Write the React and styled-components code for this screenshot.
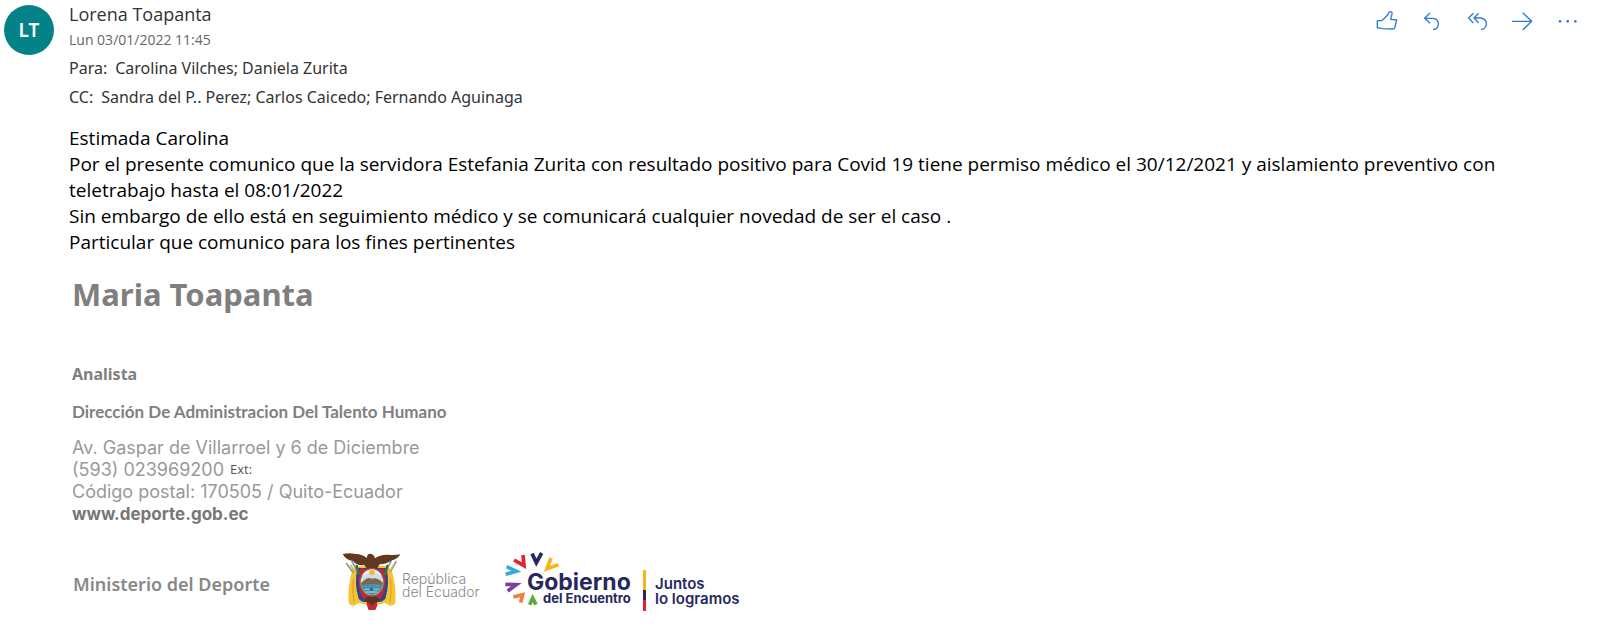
import React from "react";
import styled, { createGlobalStyle } from "styled-components";

const GlobalStyle = createGlobalStyle`
  * { box-sizing: border-box; }
  body {
    margin: 0;
    background: #fff;
    font-family: "Open Sans", "Noto Sans", sans-serif;
    color: #000;
  }
`;

const Message = styled.article`
  display: grid;
  grid-template-columns: 50px minmax(0, 1fr);
  column-gap: 15px;
  padding: 2px 24px 24px 4px;
`;

const Avatar = styled.div`
  display: flex;
  align-items: center;
  justify-content: center;
  width: 50px;
  height: 50px;
  margin-top: 3px;
  border-radius: 50%;
  background: #038387;
  color: #fff;
  font: 600 19px "Noto Sans", sans-serif;
`;

const Header = styled.header`
  display: flex;
  justify-content: space-between;
  align-items: flex-start;
`;

const Sender = styled.h1`
  margin: 0 0 2px;
  font-size: 18px;
  font-weight: 400;
  line-height: 24px;
  color: #333;
`;

const Sent = styled.time`
  display: block;
  margin-bottom: 2px;
  font-size: 14px;
  line-height: 24px;
  color: #666;
`;

const Recipients = styled.div`
  display: flex;
  gap: 8px;
  font-family: "Noto Sans", sans-serif;
  font-size: 16px;
  line-height: 29px;
  color: #333;
`;

const Actions = styled.div`
  display: flex;
  margin-right: -14px;
`;

const ActionButton = styled.button`
  display: flex;
  align-items: center;
  justify-content: center;
  width: 45px;
  height: 38px;
  padding: 0;
  border: 0;
  background: none;
  color: #2b7cd3;
  cursor: pointer;
`;

const ActionIcon = styled.svg`
  width: 24px;
  height: 24px;
  fill: none;
  stroke: currentColor;
  stroke-width: 4;
  stroke-linejoin: round;
`;

const Body = styled.div`
  margin-top: 13px;
  font-size: 19px;
  line-height: 26px;
`;

const Paragraph = styled.p`
  margin: 0;
`;

const Signature = styled.footer`
  margin-top: 19px;
  padding-left: 3px;
  color: #7f7f7f;
`;

const SignatureName = styled.h2`
  margin: 0 0 48px;
  font: 700 31px/40px "Noto Sans", sans-serif;
`;

const Role = styled.p`
  margin: 0 0 14px;
  font: 700 16px/24px "Noto Sans", sans-serif;
`;

const Department = styled.p`
  margin: 0 0 13px;
  font: 700 17px/24px Lato, sans-serif;
`;

const Address = styled.address`
  font: 400 18px/22px Inter, sans-serif;
  color: #999;
`;

const AddressLine = styled.div`
  display: flex;
  gap: 6px;
`;

const Extension = styled.span`
  font: 400 13px/20px "Open Sans", sans-serif;
  color: #555;
`;

const Website = styled.a`
  font-size: 17px;
  font-weight: 700;
  color: #777;
  text-decoration: none;
`;

const Logos = styled.div`
  display: flex;
  align-items: center;
  margin-top: 23px;
`;

const Ministry = styled.div`
  width: 270px;
  padding: 6px 0 0 1px;
  font: 600 18px/24px "Noto Sans", sans-serif;
  color: #888;
`;

const Republic = styled.div`
  width: 103px;
  padding-top: 8px;
  font: 300 14px/13px Inter, sans-serif;
  color: #888;
`;

const Crest = styled.svg`
  width: 60px;
  height: 60px;
`;

const Government = styled.svg`
  width: 240px;
  height: 66px;
  font-family: Inter, sans-serif;
  fill: #27285c;
`;

const actions = [
  {
    label: "Me gusta",
    viewBox: "21 9 72 72",
    shape: <path d="M25 44H38C46 38 56 30 60 19Q63 15 68 18Q70 20 69 25L65 40L83 42L77 66Q76 69 71 69L40 68Q32 65 25 66Z" />,
  },
  {
    label: "Responder",
    viewBox: "159 9 72 72",
    shape: <path d="M186 21L170 37L186 52M170 37H194Q211 38 211 54Q211 69 195 71" />,
  },
  {
    label: "Responder a todos",
    viewBox: "323 27 72 72",
    shape: <path d="M345 40L331 54L345 69M361 40L347 54L361 69M347 54H367Q384 56 384 72Q383 87 368 89" />,
  },
  {
    label: "Reenviar",
    viewBox: "458 27 72 72",
    shape: <path d="M461 64H520M493 38L520 64L493 90" />,
  },
  {
    label: "Más acciones",
    viewBox: "592 27 72 72",
    shape: (
      <g fill="currentColor" stroke="none">
        <circle cx="604" cy="64" r="4" />
        <circle cx="627" cy="64" r="4" />
        <circle cx="650" cy="64" r="4" />
      </g>
    ),
  },
];

const rays = [
  ["#27285c", "M99 26L112 53L128 24"],
  ["#f9b515", "M156 39L144 71L178 59"],
  ["#e2232e", "M45 45L75 62L72 30"],
  ["#35a8e0", "M23 65L52 79L20 88"],
  ["#7b3f98", "M19 118L52 119L26 138"],
  ["#f07e3c", "M43 156L71 149L65 173"],
  ["#5aaa3c", "M92 179L101 159L111 179"],
];

function EcuadorCrest() {
  return (
    <Crest viewBox="6 15 180 180" role="img" aria-label="Escudo del Ecuador">
      <path
        d="M38 70Q22 118 26 172Q34 182 46 178L58 170Q68 176 82 174H110Q124 176 134 170L146 178Q158 182 166 172Q170 118 154 70L132 60H60Z"
        fill="#f3c433"
      />
      <path d="M52 66Q42 116 56 158Q66 170 82 168H110Q126 170 136 158Q150 116 140 66Z" fill="#2d4590" />
      <path d="M60 68Q48 116 66 152Q78 166 96 164Q114 166 126 152Q144 116 132 68Z" fill="#bd273b" />
      <g fill="none" strokeLinecap="round">
        <path d="M20 53L38 78M36 47L50 72M168 47L152 76M154 44L140 70" stroke="#8a95a5" strokeWidth="5" />
        <path d="M33 58L42 76M160 58L150 76" stroke="#d9b73c" strokeWidth="5" />
        <path d="M50 60L56 84M142 60L136 84" stroke="#3e7040" strokeWidth="8" />
        <path d="M40 100Q36 135 42 168M152 100Q156 135 150 168" stroke="#d79b27" strokeWidth="3" />
      </g>
      <path
        d="M8 24Q28 20 47 24Q68 25 80 36Q82 20 95 24Q104 28 105 37Q120 25 144 26Q162 28 181 25Q174 39 155 43Q138 56 119 55L111 68H80L73 57Q49 60 39 45Q18 43 8 24Z"
        fill="#633820"
      />
      <path d="M75 157L96 147L118 157L110 172L105 190H86L82 173Z" fill="#59351f" />
      <path d="M79 174L88 169L95 179L105 169L113 176L106 192H86Z" fill="#c12a32" />
      <ellipse cx="96" cy="109" rx="38" ry="43" fill="#a84a3e" />
      <ellipse cx="96" cy="109" rx="34" ry="39" fill="#c7e2e9" />
      <path d="M67 91Q70 74 96 70Q119 73 125 91L114 84Q95 76 78 85Z" fill="#f3eee0" />
      <circle cx="96" cy="79" r="8" fill="#f1b638" />
      <path d="M63 112Q82 91 94 98Q111 93 129 110L126 124H66Z" fill="#80664c" />
      <path d="M63 118Q95 110 129 118Q125 141 96 148Q67 141 63 118Z" fill="#4896ad" />
      <path d="M73 130H117M78 138H111" stroke="#8dc2ce" strokeWidth="4" />
      <path d="M88 133L94 122L102 133Z" fill="#385e7b" />
    </Crest>
  );
}

function GovernmentLogo() {
  return (
    <Government viewBox="0 0 240 66" role="img" aria-label="Gobierno del Encuentro, Juntos lo logramos">
      <g transform="translate(-6 -3) scale(0.3333)" fill="none" strokeWidth="11">
        {rays.map(([color, d]) => (
          <path key={color} d={d} stroke={color} />
        ))}
      </g>
      <text x="22" y="42" fontSize="23" fontWeight="700">Gobierno</text>
      <text x="38" y="55" fontSize="13" fontWeight="700">del Encuentro</text>
      <path d="M138 22h3v20h-3z" fill="#f9b515" />
      <path d="M138 42h3v10h-3z" />
      <path d="M138 52h3v11h-3z" fill="#e2232e" />
      <text x="150" y="41" fontSize="15" fontWeight="600">Juntos</text>
      <text x="150" y="56" fontSize="15" fontWeight="600">lo logramos</text>
    </Government>
  );
}

export default function App() {
  return (
    <>
      <GlobalStyle />
      <Message>
        <Avatar>LT</Avatar>
        <div>
          <Header>
            <div>
              <Sender>Lorena Toapanta</Sender>
              <Sent dateTime="2022-01-03T11:45">Lun 03/01/2022 11:45</Sent>
              <Recipients>
                <span>Para:</span>
                <span>Carolina Vilches; Daniela Zurita</span>
              </Recipients>
              <Recipients>
                <span>CC:</span>
                <span>Sandra del P.. Perez; Carlos Caicedo; Fernando Aguinaga</span>
              </Recipients>
            </div>
            <Actions>
              {actions.map(({ label, viewBox, shape }) => (
                <ActionButton key={label} type="button" aria-label={label}>
                  <ActionIcon viewBox={viewBox} aria-hidden="true">{shape}</ActionIcon>
                </ActionButton>
              ))}
            </Actions>
          </Header>
          <Body>
            <Paragraph>Estimada Carolina</Paragraph>
            <Paragraph>
              Por el presente comunico que la servidora Estefania Zurita con resultado positivo para Covid 19 tiene
              permiso médico el 30/12/2021 y aislamiento preventivo con teletrabajo hasta el 08:01/2022
            </Paragraph>
            <Paragraph>
              Sin embargo de ello está en seguimiento médico y se comunicará cualquier novedad de ser el caso .
            </Paragraph>
            <Paragraph>Particular que comunico para los fines pertinentes</Paragraph>
          </Body>
          <Signature>
            <SignatureName>Maria Toapanta</SignatureName>
            <Role>Analista</Role>
            <Department>Dirección De Administracion Del Talento Humano</Department>
            <Address>
              <AddressLine>Av. Gaspar de Villarroel y 6 de Diciembre</AddressLine>
              <AddressLine>
                (593) 023969200 <Extension>Ext:</Extension>
              </AddressLine>
              <AddressLine>Código postal: 170505 / Quito-Ecuador</AddressLine>
              <AddressLine>
                <Website href="http://www.deporte.gob.ec">www.deporte.gob.ec</Website>
              </AddressLine>
            </Address>
            <Logos>
              <Ministry>Ministerio del Deporte</Ministry>
              <EcuadorCrest />
              <Republic>
                República
                <br />
                del Ecuador
              </Republic>
              <GovernmentLogo />
            </Logos>
          </Signature>
        </div>
      </Message>
    </>
  );
}
